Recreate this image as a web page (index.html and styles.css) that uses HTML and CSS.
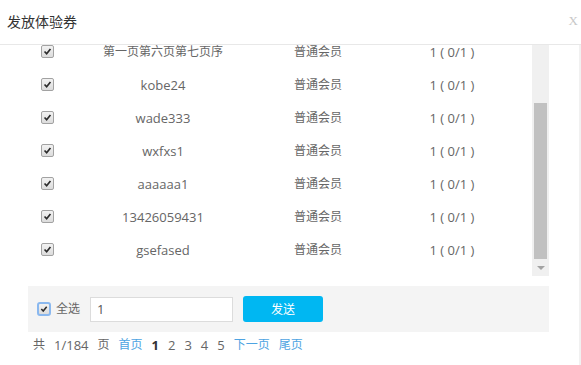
FILE: index.html
```html
<!DOCTYPE html>
<html lang="zh-CN">

<head>
    <meta charset="UTF-8">
    <title>发放体验券</title>
    <link rel="stylesheet" href="styles.css">
</head>

<body>
    <div class="dialog">
        <div class="dialog-head">
            <span class="dialog-title">发放体验券</span>
            <span class="dialog-close">X</span>
        </div>

        <div class="dialog-body">
            <div class="list-wrap">
                <div class="list">
                    <div class="list-inner">
                        <div class="row">
                            <span class="cell cell-check"><span class="cb"><svg viewBox="0 0 13 13"><path d="M3 6.5 L5.5 9.2 L10 3.6" /></svg></span></span>
                            <span class="cell zh">第一页第六页第七页序</span>
                            <span class="cell zh">普通会员</span>
                            <span class="cell">1 ( 0/1 )</span>
                        </div>
                        <div class="row">
                            <span class="cell cell-check"><span class="cb"><svg viewBox="0 0 13 13"><path d="M3 6.5 L5.5 9.2 L10 3.6" /></svg></span></span>
                            <span class="cell">kobe24</span>
                            <span class="cell zh">普通会员</span>
                            <span class="cell">1 ( 0/1 )</span>
                        </div>
                        <div class="row">
                            <span class="cell cell-check"><span class="cb"><svg viewBox="0 0 13 13"><path d="M3 6.5 L5.5 9.2 L10 3.6" /></svg></span></span>
                            <span class="cell">wade333</span>
                            <span class="cell zh">普通会员</span>
                            <span class="cell">1 ( 0/1 )</span>
                        </div>
                        <div class="row">
                            <span class="cell cell-check"><span class="cb"><svg viewBox="0 0 13 13"><path d="M3 6.5 L5.5 9.2 L10 3.6" /></svg></span></span>
                            <span class="cell">wxfxs1</span>
                            <span class="cell zh">普通会员</span>
                            <span class="cell">1 ( 0/1 )</span>
                        </div>
                        <div class="row">
                            <span class="cell cell-check"><span class="cb"><svg viewBox="0 0 13 13"><path d="M3 6.5 L5.5 9.2 L10 3.6" /></svg></span></span>
                            <span class="cell">aaaaaa1</span>
                            <span class="cell zh">普通会员</span>
                            <span class="cell">1 ( 0/1 )</span>
                        </div>
                        <div class="row">
                            <span class="cell cell-check"><span class="cb"><svg viewBox="0 0 13 13"><path d="M3 6.5 L5.5 9.2 L10 3.6" /></svg></span></span>
                            <span class="cell">13426059431</span>
                            <span class="cell zh">普通会员</span>
                            <span class="cell">1 ( 0/1 )</span>
                        </div>
                        <div class="row">
                            <span class="cell cell-check"><span class="cb"><svg viewBox="0 0 13 13"><path d="M3 6.5 L5.5 9.2 L10 3.6" /></svg></span></span>
                            <span class="cell">gsefased</span>
                            <span class="cell zh">普通会员</span>
                            <span class="cell">1 ( 0/1 )</span>
                        </div>
                    </div>
                </div>
                <div class="scrollbar">
                    <div class="scroll-thumb"></div>
                    <div class="scroll-down"></div>
                </div>
            </div>

            <div class="send-bar">
                <span class="cb cb-focus"><svg viewBox="0 0 13 13"><path d="M3 6.5 L5.5 9.2 L10 3.6" /></svg></span>
                <span class="send-label zh">全选</span>
                <input class="send-input" type="text" value="1">
                <button class="send-btn zh">发送</button>
            </div>

            <div class="pager">
                <span class="zh">共</span>
                <span>1/184</span>
                <span class="zh">页</span>
                <a class="pager-link zh">首页</a>
                <span class="pager-current">1</span>
                <span>2</span>
                <span>3</span>
                <span>4</span>
                <span>5</span>
                <a class="pager-link zh">下一页</a>
                <a class="pager-link zh">尾页</a>
            </div>
        </div>
    </div>
</body>

</html>
```

FILE: styles.css
```css
body {
    margin: 0;
    background: #ffffff;
    font-family: "Open Sans", "Noto Sans CJK SC", sans-serif;
    font-size: 13px;
    color: #666666;
}

/* chinese text runs a size smaller than latin in this font pairing */
.zh {
    font-size: 12px;
}

.dialog {
    width: 581px;
    height: 365px;
    overflow: hidden;
}

.dialog-head {
    height: 44px;
    display: flex;
    align-items: center;
    justify-content: space-between;
    border-bottom: 1px solid #e8e8e8;
    padding: 0 3px 0 7px;
}

.dialog-title {
    font-size: 14px;
    color: #333333;
    line-height: 20px;
}

.dialog-close {
    font-family: "Liberation Serif", serif;
    font-size: 13px;
    color: #c8c8c8;
    margin-top: -2px;
}

.dialog-body {
    height: 320px;
    border-right: 2px solid #f1f1f1;
}

.list-wrap {
    display: flex;
    margin-left: 28px;
    width: 521px;
    height: 231px;
}

.list {
    flex: 1;
    overflow: hidden;
}

.list-inner {
    margin-top: -10px;
}

.row {
    display: grid;
    grid-template-columns: 40px 190px 120px 148px;
    height: 33px;
    align-items: center;
}

.cell {
    text-align: center;
    line-height: 18px;
    white-space: nowrap;
}

.cell-check {
    text-align: left;
    padding-left: 13px;
    display: flex;
}

.cb {
    display: inline-block;
    width: 11px;
    height: 11px;
    border: 1px solid #a2a2a2;
    border-radius: 2px;
    background: linear-gradient(#f2f2f2, #dcdcdc);
}

.cb svg {
    display: block;
    width: 11px;
    height: 11px;
}

.cb path {
    fill: none;
    stroke: #2b2b2b;
    stroke-width: 2;
}

.cb-focus {
    border: 2px solid #8ab8ef;
    width: 10px;
    height: 10px;
    border-radius: 3px;
}

.cb-focus svg {
    width: 10px;
    height: 10px;
}

.scrollbar {
    width: 17px;
    background: #f0f0f0;
    display: flex;
    flex-direction: column;
    align-items: center;
}

.scroll-thumb {
    width: 13px;
    height: 156px;
    margin-top: 58px;
    background: #c1c1c1;
}

.scroll-down {
    flex: 1;
    width: 17px;
    display: flex;
    align-items: center;
    justify-content: center;
}

.scroll-down::after {
    content: "";
    border-left: 4px solid transparent;
    border-right: 4px solid transparent;
    border-top: 4px solid #a3a3a3;
}

.send-bar {
    display: flex;
    align-items: center;
    margin: 10px 0 0 28px;
    width: 512px;
    height: 46px;
    padding-left: 9px;
    background: #f4f4f4;
}

.send-label {
    margin-left: 5px;
    line-height: 18px;
}

.send-input {
    box-sizing: border-box;
    width: 143px;
    height: 25px;
    margin-left: 10px;
    border: 1px solid #dcdcdc;
    padding: 0 6px;
    font-family: "Open Sans", "Noto Sans CJK SC", sans-serif;
    font-size: 13px;
    color: #555555;
    background: #ffffff;
}

.send-btn {
    width: 80px;
    height: 26px;
    margin-left: 10px;
    border: none;
    border-radius: 3px;
    background: #00b7f2;
    color: #ffffff;
    font-family: "Open Sans", "Noto Sans CJK SC", sans-serif;
    padding: 0;
}

.pager {
    display: flex;
    align-items: center;
    gap: 9px;
    margin: 3px 0 0 33px;
    line-height: 20px;
}

.pager-link {
    color: #4ea4e2;
}

.pager-current {
    color: #333333;
    font-weight: bold;
}
```
